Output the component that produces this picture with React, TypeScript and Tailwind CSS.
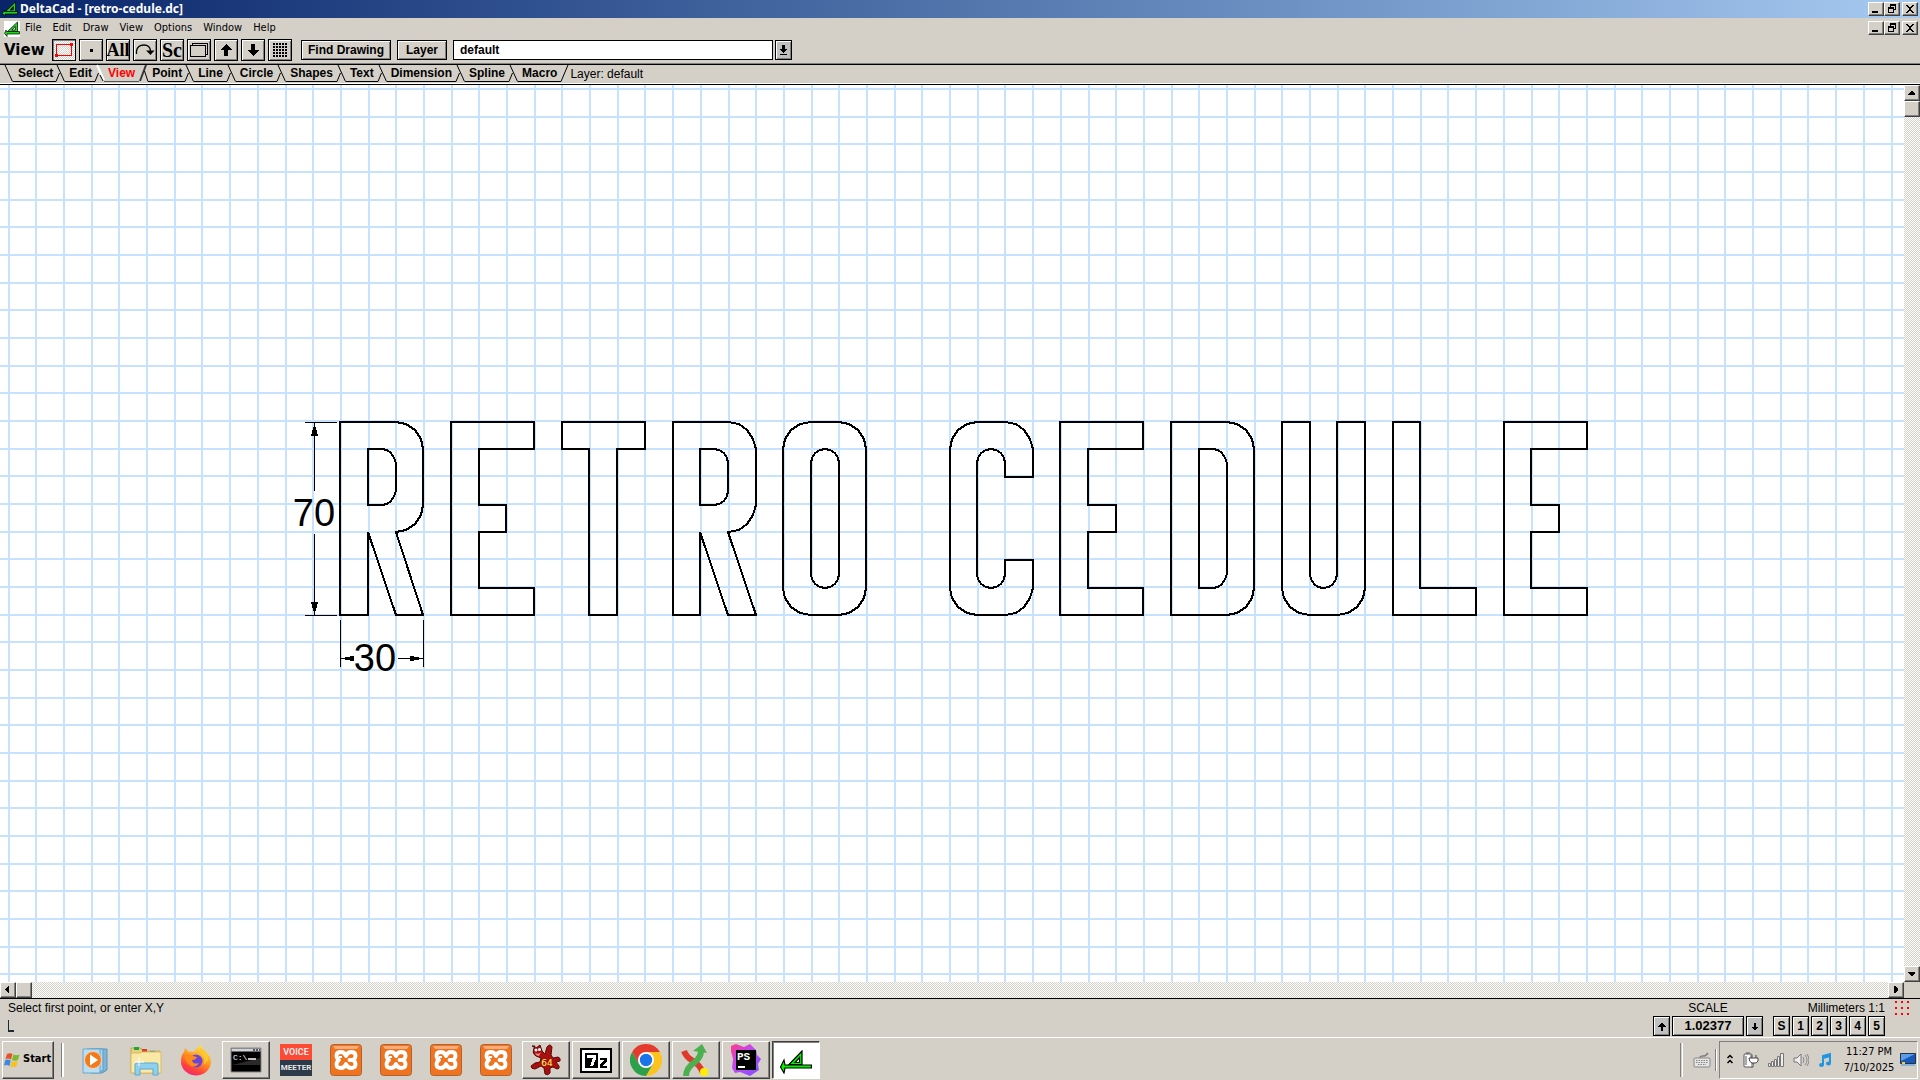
import React from 'react'

const UI = "font-['DejaVu_Sans_Condensed','DejaVu_Sans',sans-serif]"
const RAISED = 'border border-t-white border-l-white border-r-[#404040] border-b-[#404040] bg-[#d4d0c8] shadow-[inset_-1px_-1px_0_#808080]'
const PUSH = 'border border-black bg-[#d4d0c8] shadow-[inset_1px_1px_0_#fff,inset_-1px_-1px_0_#808080]'
const DITHER = 'bg-[repeating-conic-gradient(#ffffff_0_25%,#d4d0c8_0_50%)] bg-[length:2px_2px]'

/* ---------- small shared glyphs ---------- */

function DeltaLogo({ className }: { className: string }) {
  return (
    <svg viewBox="0 0 32 24" className={className} aria-hidden="true">
      <path d="M9 14.500 22 1V14.500ZM15 12.500h4.500V7.500Z" fill="#00f000" stroke="#000" strokeWidth="1.200" fillRule="evenodd" />
      <path d="M5 15H31.500V18H5L4 23 .5 17 4 10Z" fill="#00f000" stroke="#000" strokeWidth="1.200" />
    </svg>
  )
}

function DeltaLogoSmall() {
  return (
    <svg viewBox="0 0 16 16" className="h-4 w-4" aria-hidden="true">
      <path d="M3.500 10.500 13.500 1V10.500ZM8 9h3.300V5.500Z" fill="#20d020" stroke="#000" strokeWidth="0.700" fillRule="evenodd" />
      <path d="M2.500 10.500H15.500V13H3V15.500L.5 12.500 2 9Z" fill="#20d020" stroke="#000" strokeWidth="0.700" />
    </svg>
  )
}

function Arrow({ dir, className }: { dir: 'up' | 'down'; className: string }) {
  return (
    <svg viewBox="0 0 12 14" className={className} shapeRendering="crispEdges" aria-hidden="true">
      <path d={dir === 'up' ? 'M6 1 12 7H8v6H4V7H0Z' : 'M6 13 0 7h4V1h4v6h4Z'} fill="#000" />
    </svg>
  )
}

function WindowButtons({ label }: { label: string }) {
  const box = `flex h-[14px] w-4 items-center justify-center ${RAISED}`
  return (
    <div className="ml-auto flex pr-0.5">
      <button type="button" aria-label={`Minimize ${label}`} className={box}>
        <svg viewBox="0 0 12 10" className="h-[10px] w-3" shapeRendering="crispEdges"><path d="M2 7h6v2H2z" /></svg>
      </button>
      <button type="button" aria-label={`Restore ${label}`} className={box}>
        <svg viewBox="0 0 12 10" className="h-[10px] w-3" shapeRendering="crispEdges">
          <path d="M4 0h6v6H8V5h1V2H5v1H4zM2 3h6v6H2zM3 5v3h4V5z" fillRule="evenodd" />
        </svg>
      </button>
      <button type="button" aria-label={`Close ${label}`} className={`${box} ml-0.5`}>
        <svg viewBox="0 0 12 10" className="h-[10px] w-3" shapeRendering="crispEdges">
          <path d="M2 1h2v1h1v1h2V2h1V1h2v1H9v1H8v1H7v2h1v1h1v1h1v1H8V8H7V7H5v1H4v1H2V8h1V7h1V6h1V4H4V3H3V2H2z" />
        </svg>
      </button>
    </div>
  )
}

/* ---------- toolbar ---------- */

const tools: { name: string; icon: React.ReactNode }[] = [
  {
    name: 'Point zoom',
    icon: <svg viewBox="0 0 20 18" className="h-[18px] w-5" shapeRendering="crispEdges"><path d="M9 8h3v3H9z" /></svg>,
  },
  { name: 'All', icon: <span className="font-['Liberation_Serif',serif] text-lg leading-4 font-bold">All</span> },
  {
    name: 'Previous view',
    icon: (
      <svg viewBox="0 0 20 18" className="h-[18px] w-5">
        <path d="M1.500 13V10Q2.500 4 9 4q6 0 6.500 6" fill="none" stroke="#000" strokeWidth="1.3" />
        <path d="M11 9.500h8.500l-4 4.500Z" />
      </svg>
    ),
  },
  { name: 'Scale', icon: <span className="font-['Liberation_Serif',serif] text-xl leading-4 font-bold">Sc</span> },
  {
    name: 'Sheets',
    icon: (
      <svg viewBox="0 0 20 18" className="h-[18px] w-5" shapeRendering="crispEdges">
        <path d="M1.500 4.500h15v11h-15zM3.500 4V2.500h15v11H17" fill="none" stroke="#000" />
      </svg>
    ),
  },
  { name: 'Up', icon: <Arrow dir="up" className="h-[14px] w-3" /> },
  { name: 'Down', icon: <Arrow dir="down" className="h-[14px] w-3" /> },
  {
    name: 'Grid',
    icon: (
      <svg viewBox="0 0 20 18" className="h-[18px] w-5" shapeRendering="crispEdges">
        {[0, 1, 2, 3, 4].map((r) =>
          [0, 1, 2, 3, 4].map((c) => <rect key={`${r}${c}`} x={3 + c * 3} y={2 + r * 3} width="2" height="2" />),
        )}
      </svg>
    ),
  },
]

function Toolbar() {
  return (
    <div className="flex h-[26px] items-center pb-px pl-1 font-['Liberation_Sans',sans-serif] text-xs font-bold">
      <span className="w-12 font-['DejaVu_Sans',sans-serif] text-[15px] leading-5">View</span>
      <div className="flex gap-[3px]">
        <button
          type="button"
          aria-label="Zoom window"
          aria-pressed="true"
          className={`flex h-[22px] w-6 items-center justify-center border border-black ${DITHER} shadow-[inset_1px_1px_0_#808080]`}
        >
          <svg viewBox="0 0 20 18" className="h-[18px] w-5" shapeRendering="crispEdges">
            <path d="M2.500 3.500h15v11h-15z" fill="none" stroke="#f00" />
            <path d="M16 2h3v3h-3zM1 13h3v3H1z" fill="#f00" />
          </svg>
        </button>
        {tools.map((t) => (
          <button key={t.name} type="button" aria-label={t.name} className={`flex h-[22px] w-6 items-center justify-center ${PUSH}`}>
            {t.icon}
          </button>
        ))}
      </div>
      <button type="button" className={`ml-[9px] h-5 w-[90px] ${PUSH}`}>Find Drawing</button>
      <button type="button" className={`ml-1.5 h-5 w-[50px] ${PUSH}`}>Layer</button>
      <input
        aria-label="Layer name"
        defaultValue="default"
        className="ml-1.5 h-5 w-80 border border-black bg-white px-1.5 text-xs font-bold text-black outline-none"
      />
      <button type="button" aria-label="Choose layer" className="ml-0.5 flex h-5 w-[17px] items-center justify-center border border-black bg-[#c0c0c0] shadow-[inset_1px_1px_0_#fff,inset_-1px_-1px_0_#808080]">
        <svg viewBox="0 0 9 12" className="h-3 w-[9px]" shapeRendering="crispEdges"><path d="M3 1h3v4h2L4.500 9 1 5h2zM1 10h7v1H1z" /></svg>
      </button>
    </div>
  )
}

/* ---------- tabs ---------- */

const tabs = ['Select', 'Edit', 'View', 'Point', 'Line', 'Circle', 'Shapes', 'Text', 'Dimension', 'Spline', 'Macro']

function Divider({ kind }: { kind: 'plain' | 'intoActive' | 'outOfActive' | 'last' | 'first' }) {
  return (
    <svg viewBox="0 0 9 18" className="h-[18px] w-[9px] shrink-0 overflow-visible" aria-hidden="true">
      {kind === 'first' && <path d="M1 0 8.500 16.500" stroke="#000" fill="none" />}
      {kind === 'plain' && <path d="M1 0 8.500 16.500M0 16.500 3.500 8" stroke="#000" fill="none" />}
      {kind === 'intoActive' && (
        <>
          <path d="M0 16.500 3.500 8" stroke="#000" fill="none" />
          <path d="M2 0 9 15" stroke="#fff" strokeWidth="2" fill="none" />
          <path d="M5 10 8 16" stroke="#000" fill="none" />
        </>
      )}
      {kind === 'outOfActive' && (
        <>
          <path d="M1 16 7 0" stroke="#333" strokeWidth="2" fill="none" />
          <path d="M5.500 6 9 16.500" stroke="#000" fill="none" />
        </>
      )}
      {kind === 'last' && <path d="M0 16.500 7 0" stroke="#000" fill="none" />}
    </svg>
  )
}

function tabStyle(name: string, index: number) {
  if (name === 'View') return 'border-[#555] px-1 text-[#ff0000]'
  if (index === 0) return 'border-black pr-[3px] pl-[5px]'
  return index < 4 ? 'border-black pr-[3px] pl-1' : 'border-black px-1'
}

function TabStrip() {
  return (
    <div className="flex h-[19px] items-stretch border-b border-white pl-1 font-['Liberation_Sans',sans-serif] text-xs leading-4">
      <div role="tablist" className="flex">
        <Divider kind="first" />
        {tabs.map((t, i) => {
          const active = t === 'View'
          return (
            <React.Fragment key={t}>
              <button type="button" role="tab" aria-selected={active} className={`mb-px border-b pb-px font-bold ${tabStyle(t, i)}`}>
                {t}
              </button>
              <Divider
                kind={i === tabs.length - 1 ? 'last' : tabs[i + 1] === 'View' ? 'intoActive' : active ? 'outOfActive' : 'plain'}
              />
            </React.Fragment>
          )
        })}
      </div>
      <span className="leading-[18px]">Layer: default</span>
    </div>
  )
}

/* ---------- drawing ---------- */

const gx = (n: number) => Math.round(8.6 + n * 27.69)
const gy = (n: number) => Math.round(4 + n * 27.67)

const PX = (n: number) => Math.round(340.1 + n * 27.7)
const PY = (n: number) => Math.round(336.7 + n * 27.66)

type Pt = [number, number]

/* Corner rounded with four chords, from angle a0 to a1 in degrees. */
function arc(cx: number, cy: number, r: number, a0: number, a1: number): Pt[] {
  return [0, 1, 2, 3, 4].map((i) => {
    const a = ((a0 + ((a1 - a0) * i) / 4) * Math.PI) / 180
    return [cx + r * Math.cos(a), cy + r * Math.sin(a)]
  })
}

const E: Pt[][] = [[[0, 0], [3, 0], [3, 1], [1, 1], [1, 3], [2, 3], [2, 4], [1, 4], [1, 6], [3, 6], [3, 7], [0, 7]]]
const T: Pt[][] = [[[0, 0], [3, 0], [3, 1], [2, 1], [2, 7], [1, 7], [1, 1], [0, 1]]]
const L: Pt[][] = [[[0, 0], [1, 0], [1, 6], [3, 6], [3, 7], [0, 7]]]
const R: Pt[][] = [
  [[0, 0], ...arc(2, 1, 1, -90, 0), ...arc(2, 3, 1, 0, 90), [3, 7], [2, 7], [1, 4], [1, 7], [0, 7]],
  [[1, 1], ...arc(1.5, 1.5, 0.5, -90, 0), ...arc(1.5, 2.5, 0.5, 0, 90), [1, 3]],
]
const O: Pt[][] = [
  [...arc(1, 1, 1, 180, 270), ...arc(2, 1, 1, -90, 0), ...arc(2, 6, 1, 0, 90), ...arc(1, 6, 1, 90, 180)],
  [...arc(1.5, 1.5, 0.5, 180, 270), ...arc(1.5, 1.5, 0.5, -90, 0), ...arc(1.5, 5.5, 0.5, 0, 90), ...arc(1.5, 5.5, 0.5, 90, 180)],
]
const C: Pt[][] = [
  [
    ...arc(1, 1, 1, 180, 270), ...arc(2, 1, 1, -90, 0), [3, 2], [2, 2],
    ...arc(1.5, 1.5, 0.5, 0, -90), ...arc(1.5, 1.5, 0.5, 270, 180),
    ...arc(1.5, 5.5, 0.5, 180, 90), ...arc(1.5, 5.5, 0.5, 90, 0),
    [2, 5], [3, 5], ...arc(2, 6, 1, 0, 90), ...arc(1, 6, 1, 90, 180),
  ],
]
const D: Pt[][] = [
  [[0, 0], ...arc(2, 1, 1, -90, 0), ...arc(2, 6, 1, 0, 90), [0, 7]],
  [[1, 1], ...arc(1.5, 1.5, 0.5, -90, 0), ...arc(1.5, 5.5, 0.5, 0, 90), [1, 6]],
]
const U: Pt[][] = [
  [
    [0, 0], [1, 0], ...arc(1.5, 5.5, 0.5, 180, 90), ...arc(1.5, 5.5, 0.5, 90, 0), [2, 0], [3, 0],
    ...arc(2, 6, 1, 0, 90), ...arc(1, 6, 1, 90, 180),
  ],
]

const plan: [number, Pt[][]][] = [
  [0, R], [4, E], [8, T], [12, R], [16, O], [22, C], [26, E], [30, D], [34, U], [38, L], [42, E],
]

function Drawing() {
  return (
    <svg className="block h-full w-full" role="img" aria-label="RETRO CEDULE, letters 70 high and 30 wide">
      <g stroke="#c6e2ff" strokeWidth="2" shapeRendering="crispEdges">
        {Array.from({ length: 140 }, (_, i) => (
          <line key={`v${i}`} x1={gx(i)} x2={gx(i)} y1="0" y2="100%" />
        ))}
        {Array.from({ length: 80 }, (_, i) => (
          <line key={`h${i}`} x1="0" x2="100%" y1={gy(i)} y2={gy(i)} />
        ))}
      </g>
      <g fill="none" stroke="#000" strokeWidth="2" shapeRendering="crispEdges">
        {plan.map(([off, shape]) =>
          shape.map((pts, k) => (
            <polygon key={`${off}-${k}`} points={pts.map(([x, y]) => `${PX(off + x)},${PY(y)}`).join(' ')} />
          )),
        )}
      </g>
      <g stroke="#000" fill="#000" shapeRendering="crispEdges">
        <path
          fill="none"
          d="M305 337.500H337M305 530.500H337M314.500 338V406M314.500 449V530M340.500 535V582M423.500 535V582M341 573.500H354M398 573.500H423"
        />
        <path stroke="none" d="M314.500 338 318 351H311ZM314.500 530 318 517H311ZM341 573.500 354 570.500V576.500ZM423 573.500 410 570.500V576.500Z" />
      </g>
      <g fontFamily="Liberation Sans, Arial, sans-serif" fontSize="38" textAnchor="middle">
        <text x="314" y="441">70</text>
        <text x="375" y="586">30</text>
      </g>
    </svg>
  )
}

function ScrollButton({ label, d }: { label: string; d: string }) {
  return (
    <button type="button" aria-label={label} className={`flex h-4 w-4 shrink-0 items-center justify-center ${RAISED}`}>
      <svg viewBox="0 0 12 12" className="h-3 w-3" shapeRendering="crispEdges"><path d={d} /></svg>
    </button>
  )
}

/* ---------- status bar ---------- */

function StatusBar() {
  const small = `h-5 w-[17px] text-xs font-bold ${PUSH}`
  const step = 'flex h-5 w-[17px] items-center justify-center border border-black bg-[#c0c0c0] shadow-[inset_1px_1px_0_#fff,inset_-1px_-1px_0_#808080]'
  return (
    <div className="flex h-[39px] shrink-0 border-t border-black font-['Liberation_Sans',sans-serif] text-xs leading-4">
      <div className="pt-px pl-2">
        <div>Select first point, or enter X,Y</div>
        <div className="mt-1 h-3 w-1.5 border-b-2 border-l border-[#202830]" />
      </div>
      <div className="ml-auto flex gap-[10px] pt-px">
        <div>
          <div className="text-center">
            <label htmlFor="scale">SCALE</label>
          </div>
          <div className="flex gap-0.5">
            <button type="button" aria-label="Increase scale" className={step}><Arrow dir="up" className="h-[11px] w-2" /></button>
            <button type="button" id="scale" className={`h-5 w-[72px] text-[13px] font-bold ${PUSH}`}>1.02377</button>
            <button type="button" aria-label="Decrease scale" className={step}><Arrow dir="down" className="h-[11px] w-2" /></button>
          </div>
        </div>
        <div>
          <div className="text-right">Millimeters 1:1</div>
          <div className="flex gap-0.5">
            {['S', '1', '2', '3', '4', '5'].map((s) => (
              <button key={s} type="button" className={small}>{s}</button>
            ))}
          </div>
        </div>
        <svg viewBox="0 0 16 16" className="mr-[9px] h-4 w-4" shapeRendering="crispEdges" aria-hidden="true">
          {[0, 1, 2].map((r) => [0, 1, 2].map((c) => <rect key={`${r}${c}`} x={c * 6} y={1 + r * 6} width="2" height="2" fill="#f00" />))}
        </svg>
      </div>
    </div>
  )
}

/* ---------- taskbar ---------- */

function MediaPlayer() {
  return (
    <svg viewBox="0 0 32 32" className="h-8 w-8">
      <path d="M11 5h16v21l-5 3H11z" fill="#7fb6d8" stroke="#5b94ba" />
      <path d="M7 5h16v22H7z" fill="#a8d4ec" stroke="#5b9dc6" />
      <path d="M3 5h17v24H3z" fill="#b9def2" stroke="#68a8cd" />
      <circle cx="13" cy="16" r="8.500" fill="#f07a1c" stroke="#fbd3ad" />
      <path d="M10 10.500v11l8-5.500Z" fill="#fff" />
    </svg>
  )
}

function Explorer() {
  return (
    <svg viewBox="0 0 32 32" className="h-8 w-8">
      <path d="M1 4h10l2 3h17v22H1z" fill="#e8cf7c" stroke="#c8a850" />
      <path d="M4 3h5v3H4z" fill="#19a83c" />
      <path d="M12 5h5v3h-5z" fill="#d8402c" />
      <path d="M20 7h5v3h-5z" fill="#2b8de0" />
      <path d="M1 9h9l2-1h19v21H1z" fill="#f9e8a6" stroke="#d8bc68" />
      <path d="M5 31V21q0-2 2-2h19q2 0 2 2v10h-5v-6H10v6z" fill="#8fd0ee" stroke="#5ca9d0" />
      <path d="M9 13v9M5 18h9" stroke="#fff" strokeWidth="1" />
    </svg>
  )
}

function Firefox() {
  return (
    <svg viewBox="0 0 32 32" className="h-8 w-8">
      <defs>
        <linearGradient id="fx" x1="0.8" y1="0" x2="0.3" y2="1">
          <stop offset="0" stopColor="#fff04a" />
          <stop offset="0.45" stopColor="#ff9a1f" />
          <stop offset="0.8" stopColor="#ff3f3d" />
          <stop offset="1" stopColor="#f0267c" />
        </linearGradient>
      </defs>
      <path d="M21 1q1 4 4 6 6 5 6 11a15 14 0 0 1-30-1q0-6 3-9l1-4 4 4q3-1 5 0 3-5 7-7Z" fill="url(#fx)" />
      <circle cx="16" cy="17" r="6.500" fill="#6a45d8" />
      <path d="M5 12q5-3 8 0l4 1q-1 3-5 3 1 5 7 3-3 5-8 3-6-3-6-10Z" fill="#ff8a1c" />
      <path d="M20 3q-1 6 3 9 3 5 0 9 6-3 5-9-1-4-8-9Z" fill="#ffc832" />
    </svg>
  )
}

function Cmd() {
  return (
    <svg viewBox="0 0 32 32" className="h-8 w-8">
      <path d="M1 4h30v24H1z" fill="#000" stroke="#888" />
      <path d="M1.500 4.500h29v3h-29z" fill="#d0d4d8" />
      <path d="M23 5h2v2h-2zM26 5h2v2h-2zM29 5h1v2h-1z" fill="#556" />
      <path d="M2 21 30 14v7Z" fill="#2a2a2a" />
      <text x="3" y="16" fill="#fff" fontSize="8" fontFamily="Liberation Mono, monospace">C:\</text>
      <path d="M18 15h8" stroke="#fff" strokeWidth="1.500" />
    </svg>
  )
}

function VoiceMeeter() {
  return (
    <span className="flex h-8 w-8 flex-col overflow-hidden font-['Roboto',sans-serif] leading-4 font-bold text-[#e8e8e8]">
      <span className="flex h-4 justify-center bg-[#fd4a35] text-[9px]">VOICE</span>
      <span className="flex h-4 justify-center bg-[#2c3a4a] text-[8px]">MEETER</span>
    </span>
  )
}

function Xampp() {
  return (
    <svg viewBox="0 0 32 32" className="h-8 w-8">
      <rect x="0.500" y="0.500" width="31" height="31" rx="3" fill="#ee7422" stroke="#b5622a" />
      <path d="M3 2h26l-2 3H5z" fill="#f9ab78" />
      <path
        d="M16 12Q14.500 8 11 8 6.500 8 6.500 11.500 6.500 14.500 9 16 6.500 17.500 6.500 20.500 6.500 24 11 24 14.500 24 16 20 17.500 24 21 24 25.500 24 25.500 20.500 25.500 17.500 23 16 25.500 14.500 25.500 11.500 25.500 8 21 8 17.500 8 16 12ZM19.500 16H23"
        fill="none" stroke="#fff" strokeWidth="3.800" strokeLinecap="round" strokeLinejoin="round"
      />
      <path d="M9 13h3" stroke="#fff" strokeWidth="2" />
    </svg>
  )
}

function Irfan() {
  return (
    <svg viewBox="0 0 32 32" className="h-8 w-8">
      <path
        d="M2 2 6 4l4-3 2 6 3 3 2-7q3-4 5 0l-1 8 2 3 5-1q3 1 2 4l-4 1 3 4q1 3-2 3l-4-2-3 1v5q-2 3-5 1l-1-6-3-2-6 3q-4 0-4-3l4-3 5-1 1-4-5-2q-5-3-1-10Z"
        fill="#a80f0f" stroke="#5c0808"
      />
      <circle cx="6" cy="6" r="1.500" fill="#fff" />
      <circle cx="9.500" cy="5.500" r="1.500" fill="#fff" />
      <path d="M5 9q4 2 6-1l-2 4q-3 0-4-3Z" fill="#e88" />
      <text x="17" y="22" fill="#ffff5a" fontSize="9" textAnchor="middle" fontFamily="DejaVu Sans, sans-serif">64</text>
    </svg>
  )
}

function SevenZip() {
  return (
    <svg viewBox="0 0 32 32" className="h-8 w-8" shapeRendering="crispEdges">
      <path d="M1 5h30v23H1z" fill="#fff" stroke="#000" strokeWidth="2" />
      <path d="M5 9h13v15H5z" fill="#000" />
      <path d="M7 11h9v4l-3 7h-3l3-8H7z" fill="#fff" />
      <path d="M20 14h7v3l-4 5h4v2h-7v-3l4-5h-4z" fill="#000" />
    </svg>
  )
}

function Chrome() {
  return (
    <svg viewBox="0 0 32 32" className="h-8 w-8">
      <path d="M16 8H29.860A16 16 0 0 1 16 32L22.930 20Z" fill="#fcc31e" />
      <path d="M2.140 8A16 16 0 0 0 16 32L22.930 20 16 22 9.070 20Z" fill="#2da04c" />
      <path d="M2.140 8 9.070 20 16 8H29.860A16 16 0 0 0 2.140 8Z" fill="#e33b2e" />
      <circle cx="16" cy="16" r="8" fill="#fff" />
      <circle cx="16" cy="16" r="6.200" fill="#1a73e8" />
    </svg>
  )
}

function CrossArrows() {
  return (
    <svg viewBox="0 0 32 32" className="h-8 w-8">
      <path d="M4 7q2 6 9 10t10 12" fill="none" stroke="#dd3a2c" strokeWidth="6" />
      <path d="M6 32q0-8 9-14 6-5 6-11" fill="none" stroke="#4caf50" strokeWidth="6" />
      <path d="M13 7 22 0l5 9Z" fill="#4caf50" />
      <circle cx="24" cy="28" r="4" fill="#ffee00" />
    </svg>
  )
}

function PhpStorm() {
  return (
    <svg viewBox="0 0 32 32" className="h-8 w-8">
      <defs>
        <linearGradient id="ps" x1="0" y1="0" x2="1" y2="1">
          <stop offset="0" stopColor="#ff3a86" />
          <stop offset="0.4" stopColor="#c548f0" />
          <stop offset="1" stopColor="#7a52ff" />
        </linearGradient>
      </defs>
      <path d="M1 2 6 0l8 3 6-3 6 6 1 5 4 4-3 5 1 6-9 6-10-4-5 1-3-5 1-9-2-8Z" fill="url(#ps)" />
      <path d="M6 6h20v20H6z" fill="#000" />
      <text x="7" y="16" fill="#fff" fontSize="11" fontWeight="bold" fontFamily="Liberation Mono, monospace">PS</text>
      <path d="M8 22h7v2H8z" fill="#fff" />
    </svg>
  )
}

const tasks: { name: string; icon: React.ReactNode; open?: boolean; active?: boolean }[] = [
  { name: 'Media Player', icon: <MediaPlayer /> },
  { name: 'Explorer', icon: <Explorer /> },
  { name: 'Firefox', icon: <Firefox /> },
  { name: 'Command Prompt', icon: <Cmd />, open: true },
  { name: 'Voicemeeter', icon: <VoiceMeeter /> },
  { name: 'XAMPP 1', icon: <Xampp /> },
  { name: 'XAMPP 2', icon: <Xampp /> },
  { name: 'XAMPP 3', icon: <Xampp /> },
  { name: 'XAMPP 4', icon: <Xampp /> },
  { name: 'IrfanView 64', icon: <Irfan />, open: true },
  { name: '7-Zip', icon: <SevenZip />, open: true },
  { name: 'Chrome', icon: <Chrome />, open: true },
  { name: 'Compare', icon: <CrossArrows />, open: true },
  { name: 'PhpStorm', icon: <PhpStorm />, open: true },
  { name: 'DeltaCad', icon: <DeltaLogo className="mt-1 h-6 w-8" />, open: true, active: true },
]

function Tray() {
  return (
    <div className="ml-auto flex items-center">
      <div className="h-[34px] w-[3px] border-r border-l border-r-white border-l-[#808080]" />
      <svg viewBox="0 0 18 16" className="mr-1 ml-2.5 h-4 w-[18px]" aria-hidden="true">
        <path d="M7 6q0-2 3-2t5-3" fill="none" stroke="#808080" strokeWidth="1.500" />
        <rect x="1" y="6" width="16" height="9" rx="1" fill="#e4e4e4" stroke="#888" />
        <path d="M3 8.500h12M3 10.500h12M5 12.500h8" stroke="#888" strokeDasharray="1.500 1" />
      </svg>
      <div className="h-[22px] w-0.5 border-r border-l border-r-white border-l-[#808080]" />
      <div className="ml-0.5 flex h-[38px] items-center gap-[9px] border border-t-[#808080] border-r-white border-b-white border-l-[#808080] pr-px pl-1.5">
        <button type="button" aria-label="Show hidden icons" className="h-4 w-2">
          <svg viewBox="0 0 8 16" className="h-4 w-2"><path d="M1.500 6 4 3.500 6.500 6M1.500 11 4 8.500 6.500 11" fill="none" stroke="#000" strokeWidth="1.500" /></svg>
        </button>
        <svg viewBox="0 0 16 16" className="h-4 w-4" aria-label="Power">
          <rect x="1" y="2" width="8" height="13" rx="1" fill="#fff" stroke="#555" />
          <path d="M3 1h4" stroke="#555" />
          <path d="M3 4v9" stroke="#aaa" strokeWidth="2" />
          <path d="M6 6h9v3q-1 2-3 2H9Q6 10 6 6ZM8 6V3M13 6V3M10 11v4H8" fill="#fff" stroke="#444" />
        </svg>
        <svg viewBox="0 0 16 14" className="h-[14px] w-4" aria-label="Network">
          <path d="M.5 10.500h2v3h-2zM3.500 8.500h2v5h-2zM6.500 6.500h2v7h-2zM9.500 3.500h2v10h-2zM12.500.5h3v13h-3z" fill="#eee" stroke="#777" />
        </svg>
        <svg viewBox="0 0 16 16" className="h-4 w-4" aria-label="Volume">
          <path d="M1 6h3l4-4v12l-4-4H1z" fill="#eee" stroke="#777" />
          <path d="M10 5q2 3 0 6M12 3q4 5 0 10M14 2q4 6 0 12" fill="none" stroke="#888" />
        </svg>
        <svg viewBox="0 0 14 16" className="h-4 w-[14px]" aria-label="Media">
          <path d="M5 13V4l7-2v9M5 6l7-2" fill="none" stroke="#1f97e0" strokeWidth="2" />
          <ellipse cx="3.500" cy="13" rx="2.500" ry="2" fill="#1f97e0" />
          <ellipse cx="10.500" cy="11.500" rx="2.500" ry="2" fill="#1f97e0" />
        </svg>
        <div className={`ml-0.5 w-[52px] text-center text-[11px] leading-4 ${UI}`}>
          <div>11:27 PM</div>
          <div>7/10/2025</div>
        </div>
        <svg viewBox="0 0 16 14" className="-ml-1 h-[14px] w-4" aria-label="Show desktop">
          <path d="M.5.5h15v10H.5z" fill="#1758b8" stroke="#234" />
          <path d="M1 1h14L1 8z" fill="#5b9be8" />
          <path d="M1 11h14v2H1z" fill="#8ab0d8" />
          <path d="M2 9h3v2H2z" fill="#fc3" />
        </svg>
      </div>
    </div>
  )
}

function Taskbar() {
  return (
    <div className="flex h-[43px] shrink-0 items-center border-t border-white px-0.5 pt-px">
      <button type="button" className={`flex h-[38px] w-[52px] items-center gap-0.5 pl-px ${RAISED} text-[11px] font-bold ${UI}`}>
        <svg viewBox="0 0 17 16" className="h-4 w-[17px]" aria-hidden="true">
          <path d="M3 2q3-1.500 5.500 0L7 7.500Q4.500 6 1.500 7Z" fill="#e8502a" />
          <path d="M9.500 2.500q3 1.500 6 0L14 8q-3 1.500-6 0Z" fill="#7cbb2c" />
          <path d="M1.300 8Q4 7 6.700 8.500L5.500 14Q3 12.500 0 13.500Z" fill="#3a8be0" />
          <path d="M7.800 9q3 1.500 6 0l-1.500 5.500q-3 1.500-6 0Z" fill="#f8c020" />
        </svg>
        Start
      </button>
      <div className="ml-[7px] h-[34px] w-[3px] border-r-2 border-l border-r-white border-l-[#808080]" />
      <nav aria-label="Running programs" className="ml-2 flex gap-0.5">
        {tasks.map((t) => (
          <button
            key={t.name}
            type="button"
            aria-label={t.name}
            className={`flex h-[38px] w-12 items-center justify-center ${
              t.active
                ? 'border border-t-[#404040] border-r-white border-b-white border-l-[#404040] bg-white shadow-[inset_1px_1px_0_#808080]'
                : t.open
                  ? RAISED
                  : ''
            }`}
          >
            {t.icon}
          </button>
        ))}
      </nav>
      <Tray />
    </div>
  )
}

export default function App() {
  return (
    <div className="flex h-screen flex-col overflow-hidden bg-[#d4d0c8] text-black">
      <header className="flex h-[18px] shrink-0 items-center bg-gradient-to-r from-[#0a246a] to-[#a6caf0] pl-0.5">
        <DeltaLogoSmall />
        <h1 className="pl-0.5 font-['Noto_Sans',sans-serif] text-xs leading-4 font-bold text-white">DeltaCad - [retro-cedule.dc]</h1>
        <WindowButtons label="DeltaCad" />
      </header>
      <nav aria-label="Menu" className={`flex h-[19px] shrink-0 items-center pl-1 text-[11px] ${UI}`}>
        <span className="mt-0.5 flex h-4 w-4 items-center bg-white"><DeltaLogoSmall /></span>
        <div className="flex gap-[11px] pt-0.5 pl-[5px]">
          {['File', 'Edit', 'Draw', 'View', 'Options', 'Window', 'Help'].map((m) => (
            <button key={m} type="button">{m}</button>
          ))}
        </div>
        <WindowButtons label="drawing" />
      </nav>
      <Toolbar />
      <div className="h-0.5 shrink-0 border-t border-b border-t-[#808080] border-b-black" />
      <TabStrip />
      <div className="h-px shrink-0 bg-black" />
      <main className="flex min-h-0 flex-1">
        <div className="min-w-0 flex-1 bg-white"><Drawing /></div>
        <div className={`flex w-4 flex-col ${DITHER}`}>
          <ScrollButton label="Scroll up" d="M6 4 9 7V8H2V7L5 4Z" />
          <div className={`h-4 w-4 ${RAISED}`} />
          <div className="flex-1" />
          <ScrollButton label="Scroll down" d="M2 4h7v1L6 8H5L2 5Z" />
        </div>
      </main>
      <div className="flex h-4 shrink-0">
        <div className={`flex flex-1 ${DITHER}`}>
          <ScrollButton label="Scroll left" d="M7 2v7H6L3 6V5L6 2Z" />
          <div className={`h-4 w-4 ${RAISED}`} />
          <div className="flex-1" />
          <ScrollButton label="Scroll right" d="M4 2h1l3 3v1L5 9H4Z" />
        </div>
        <div className="w-4" />
      </div>
      <StatusBar />
      <Taskbar />
    </div>
  )
}
